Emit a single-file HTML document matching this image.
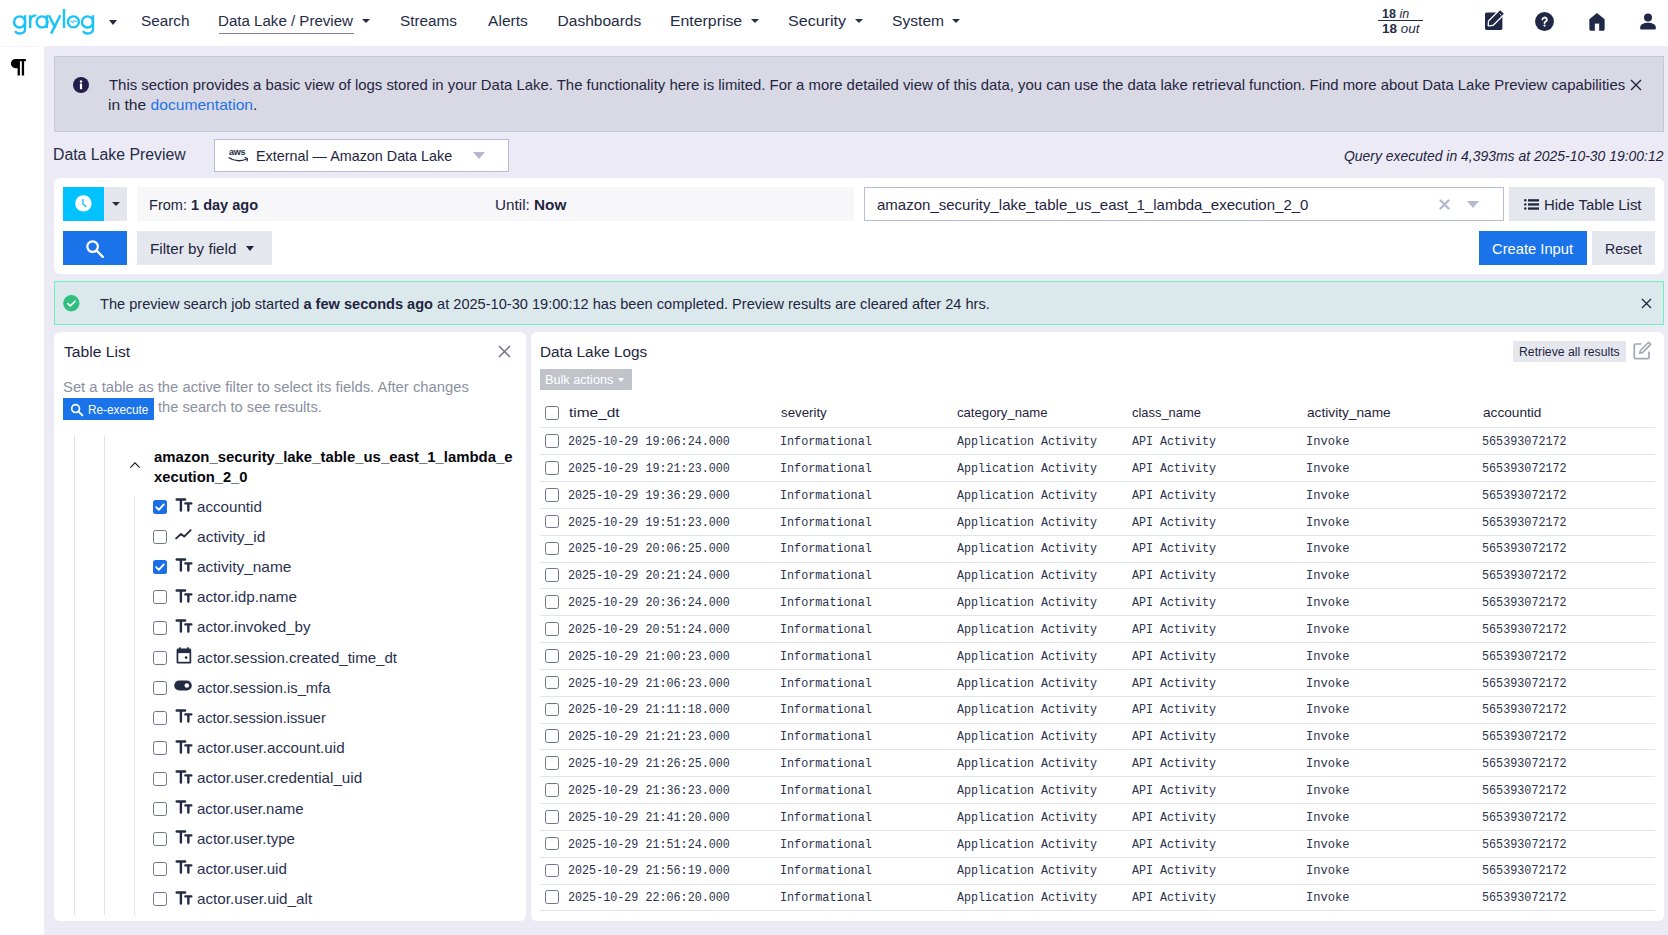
<!DOCTYPE html>
<html><head><meta charset="utf-8">
<style>
*{box-sizing:border-box}
html,body{margin:0;padding:0}
body{width:1668px;height:935px;overflow:hidden;position:relative;background:#fff;font-family:"Liberation Sans",sans-serif}
.a{position:absolute}
.t{position:absolute;white-space:nowrap;line-height:0;transform-origin:0 0}
.t b{font-weight:700}
.cb{position:absolute;width:14px;height:14px;border:1.3px solid #70758a;border-radius:2.5px;background:#fff}
.cbc{position:absolute;width:14px;height:14px;border-radius:2.5px;background:#1a6fe8}
.caret{position:absolute;width:0;height:0;border-left:4px solid transparent;border-right:4px solid transparent;border-top:4.5px solid #252c46}
.rowb{position:absolute;left:540px;width:1115px;height:1px;background:#e1e5ee}
.vl{position:absolute;width:1px;background:#e3e4eb}
</style></head><body>
<!-- navbar -->
<div class="a" style="left:0;top:0;width:1668px;height:46px;background:#fff"></div>
<!-- content bg -->
<div class="a" style="left:44px;top:46px;width:1624px;height:889px;background:#ecebf5;border-top-left-radius:3px"></div>
<div class="a" style="left:0;top:46px;width:44px;height:1px;background:#f4f4f8"></div>

<svg class="a" style="left:0;top:0" width="100" height="40" viewBox="0 0 100 40">
<g fill="none" stroke="#17c3f7" stroke-width="2.4">
<circle cx="19.6" cy="21.9" r="5.55"/><path d="M25 15.2V29.2c0 2.6-2.3 4.3-5.2 4.3-2.1 0-3.8-.9-4.8-2.4"/>
<path d="M30.2 28V15.3M30.2 21c.3-3.7 2.6-5.6 6.2-5.6"/>
<circle cx="42.1" cy="21.9" r="5.5"/><path d="M46.8 15.2V28"/>
<path d="M48.9 15.3L55.3 28.3M60.3 15.3L51.1 33.6"/>
<path d="M64 9V28"/>
<circle cx="73.4" cy="21.85" r="5.5"/>
<circle cx="87.5" cy="21.9" r="5.55"/><path d="M93 15.2V29.2c0 2.6-2.3 4.3-5.2 4.3-2.1 0-3.8-.9-4.8-2.4"/>
</g>
<path d="M70.2 21.4H71.8L72.7 23.2 73.7 20.2 74.5 21.4H76.8" fill="none" stroke="#17c3f7" stroke-width=".9"/>
</svg>
<!-- nav carets -->
<div class="caret" style="left:108.5px;top:20px;border-left-width:4.2px;border-right-width:4.2px;border-top-width:5px"></div>
<div class="caret" style="left:361.5px;top:18.5px"></div>
<div class="caret" style="left:751.3px;top:18.5px"></div>
<div class="caret" style="left:855.3px;top:18.5px"></div>
<div class="caret" style="left:952.3px;top:18.5px"></div>
<div class="a" style="left:219px;top:32.5px;width:135px;height:1.5px;background:#7d819a"></div>
<div class="a" style="left:1378px;top:20px;width:45px;height:1px;background:#252c46"></div>

<!-- nav icons -->
<svg class="a" style="left:1484px;top:10px" width="22" height="22" viewBox="0 0 22 22">
  <rect x="1" y="2.4" width="17.4" height="17.5" rx="1.6" fill="#1f2847"/>
  <path d="M16.2 .2L19.8 3.8 8.8 14.8 4.8 15.2 5.2 11.2z" fill="#1f2847" stroke="#fff" stroke-width="2.6" stroke-linejoin="round"/>
  <path d="M16.2 .2L19.8 3.8 8.8 14.8 4.8 15.2 5.2 11.2z" fill="#1f2847"/>
  <path d="M15.6 3.6l1.6 1.6" stroke="#fff" stroke-width=".9"/>
</svg>
<svg class="a" style="left:1535px;top:11.5px" width="19" height="19" viewBox="0 0 19 19">
  <circle cx="9.5" cy="9.5" r="9.4" fill="#1f2847"/>
  <path d="M7.4 7.6a2.2 2.1 0 1 1 3.2 1.9c-.8.4-1.1.8-1.1 1.6" fill="none" stroke="#fff" stroke-width="1.8" stroke-linecap="round"/>
  <circle cx="9.5" cy="13.6" r="1.1" fill="#fff"/>
</svg>
<svg class="a" style="left:1589px;top:12.5px" width="16" height="18" viewBox="0 0 16 18">
  <path d="M8 0.3L15.3 6.3V16.3a1.1 1.1 0 0 1-1.1 1.1H10.4V10.3H5.6V17.4H1.8A1.1 1.1 0 0 1 .7 16.3V6.3z" fill="#1f2847" stroke="#1f2847" stroke-width=".6" stroke-linejoin="round"/>
</svg>
<svg class="a" style="left:1640px;top:12.5px" width="16" height="17" viewBox="0 0 16 17">
  <circle cx="8" cy="4.4" r="4" fill="#1f2847"/>
  <path d="M0.2 14.2C0.6 11.2 3.5 9.7 8 9.7s7.4 1.5 7.8 4.5v1.2a1.1 1.1 0 0 1-1.1 1.1H1.3A1.1 1.1 0 0 1 .2 15.4z" fill="#1f2847"/>
</svg>

<!-- sidebar pilcrow -->
<svg class="a" style="left:10px;top:58px" width="17" height="18" viewBox="0 0 17 18">
<path d="M5.5 1H15.8V3.2H14.1V17.4H11.8V3.2H9.9V17.4H7.6V10.2H5.5A4.6 4.6 0 0 1 5.5 1z" fill="#000"/>
</svg>

<!-- info alert -->
<div class="a" style="left:54px;top:56px;width:1610px;height:76px;background:#d9d9e5;border:1px solid #c6c7d5"></div>
<svg class="a" style="left:73px;top:76.8px" width="16" height="16" viewBox="0 0 16 16">
  <circle cx="8" cy="8" r="8" fill="#221e4c"/>
  <rect x="6.9" y="6.6" width="2.2" height="5.6" rx=".5" fill="#fff"/>
  <circle cx="8" cy="4.5" r="1.2" fill="#fff"/>
</svg>
<svg class="a" style="left:1630px;top:78.5px" width="12" height="12" viewBox="0 0 12 12">
  <path d="M1 1L11 11M11 1L1 11" stroke="#1f2540" stroke-width="1.4"/>
</svg>

<!-- select -->
<div class="a" style="left:214px;top:138.6px;width:294.5px;height:33px;background:#fff;border:1px solid #b7bbd6"></div>
<div class="a" style="left:229.3px;top:146.5px;font:700 8.6px 'Liberation Sans',sans-serif;color:#232a44;line-height:10px;letter-spacing:-.3px;transform:scaleX(1.05);transform-origin:0 0">aws</div>
<svg class="a" style="left:228px;top:155.5px" width="21" height="7" viewBox="0 0 21 7">
  <path d="M1 1.8C6 5.5 14 5.5 18.5 3" fill="none" stroke="#232a44" stroke-width="1.3" stroke-linecap="round"/>
  <path d="M17 1.5L19.5 2.5 19 5" fill="none" stroke="#232a44" stroke-width="1.2" stroke-linecap="round"/>
</svg>
<div class="caret" style="left:473px;top:151.6px;border-left-width:6.2px;border-right-width:6.2px;border-top-width:7px;border-top-color:#b4b8cf"></div>

<!-- search panel -->
<div class="a" style="left:54px;top:178px;width:1610px;height:96px;background:#fff;border-radius:6px"></div>
<div class="a" style="left:63px;top:187px;width:41px;height:34px;background:#00c2ff"></div>
<svg class="a" style="left:75px;top:195.3px" width="17" height="17" viewBox="0 0 17 17">
  <circle cx="8.4" cy="8.4" r="8.2" fill="#fff"/>
  <path d="M8 4.5V9l2.8 2.6" fill="none" stroke="#00c2ff" stroke-width="1.3" stroke-linecap="round"/>
</svg>
<div class="a" style="left:104px;top:187px;width:23px;height:34px;background:#e4e6ee"></div>
<div class="caret" style="left:111.8px;top:201.8px;border-top-color:#2a2a35;border-top-width:4.5px"></div>
<div class="a" style="left:137px;top:187px;width:717px;height:34px;background:#f7f7fa"></div>
<div class="a" style="left:864px;top:187px;width:640px;height:34px;background:#fff;border:1px solid #b7bbd6"></div>
<svg class="a" style="left:1438.5px;top:198.5px" width="11" height="11" viewBox="0 0 11 11">
  <path d="M1.5 1.5L9.5 9.5M9.5 1.5L1.5 9.5" stroke="#b5b9d2" stroke-width="2.3" stroke-linecap="round"/>
</svg>
<div class="caret" style="left:1467px;top:201px;border-left-width:6px;border-right-width:6px;border-top-width:7px;border-top-color:#b4b8cf"></div>
<div class="a" style="left:1509px;top:187px;width:146px;height:34px;background:#e5e7ee"></div>
<svg class="a" style="left:1523.5px;top:198.5px" width="16" height="11" viewBox="0 0 16 11">
  <circle cx="1.3" cy="1.3" r="1.2" fill="#1f2540"/><circle cx="1.3" cy="5.4" r="1.2" fill="#1f2540"/><circle cx="1.3" cy="9.5" r="1.2" fill="#1f2540"/>
  <rect x="4" y=".2" width="11" height="2.3" fill="#1f2540"/><rect x="4" y="4.3" width="11" height="2.3" fill="#1f2540"/><rect x="4" y="8.4" width="11" height="2.3" fill="#1f2540"/>
</svg>
<div class="a" style="left:63px;top:231px;width:64px;height:34px;background:#1a73e8"></div>
<svg class="a" style="left:85px;top:238.5px" width="20" height="20" viewBox="0 0 20 20">
  <circle cx="7.6" cy="7.6" r="5.3" fill="none" stroke="#fff" stroke-width="2.2"/>
  <path d="M11.5 11.5L17.8 17.8" stroke="#fff" stroke-width="2.4" stroke-linecap="round"/>
</svg>
<div class="a" style="left:137px;top:231px;width:135px;height:34px;background:#e5e7ee"></div>
<div class="caret" style="left:245.6px;top:245.8px;border-top-color:#1f2540;border-top-width:5px"></div>
<div class="a" style="left:1479px;top:231px;width:108px;height:34px;background:#1a73e8"></div>
<div class="a" style="left:1592px;top:231px;width:63px;height:34px;background:#e5e7ee"></div>

<!-- success alert -->
<div class="a" style="left:54px;top:281px;width:1610px;height:44px;background:#dbe9ec;border:1px solid #6bf3bd"></div>
<svg class="a" style="left:63px;top:294.8px" width="17" height="17" viewBox="0 0 17 17">
  <circle cx="8.3" cy="8.3" r="8.2" fill="#2fbf7f"/>
  <path d="M4.8 8.6l2.4 2.3 4.8-4.6" fill="none" stroke="#fff" stroke-width="1.6" stroke-linecap="round" stroke-linejoin="round"/>
</svg>
<svg class="a" style="left:1640.5px;top:297.5px" width="11" height="11" viewBox="0 0 11 11">
  <path d="M1 1L10 10M10 1L1 10" stroke="#1f2540" stroke-width="1.25"/>
</svg>

<!-- table list panel -->
<div class="a" style="left:54px;top:332px;width:472px;height:589px;background:#fff;border-radius:6px"></div>
<svg class="a" style="left:497.5px;top:344.5px" width="13" height="13" viewBox="0 0 13 13">
  <path d="M1 1L12 12M12 1L1 12" stroke="#6f7386" stroke-width="1.5"/>
</svg>
<div class="a" style="left:63px;top:398px;width:91px;height:22px;background:#1a73e8"></div>
<svg class="a" style="left:69.5px;top:403px" width="14" height="14" viewBox="0 0 14 14">
  <circle cx="5.6" cy="5.6" r="3.9" fill="none" stroke="#fff" stroke-width="1.7"/>
  <path d="M8.4 8.4L12.4 12.4" stroke="#fff" stroke-width="1.9" stroke-linecap="round"/>
</svg>
<div class="vl" style="left:74px;top:435px;height:480px"></div>
<div class="vl" style="left:104px;top:435px;height:480px"></div>
<div class="vl" style="left:134px;top:496px;height:419px"></div>
<svg class="a" style="left:129px;top:461px" width="12" height="8" viewBox="0 0 12 8">
  <path d="M1.3 6.6L6 1.8l4.7 4.8" fill="none" stroke="#15182a" stroke-width="1.1"/>
</svg>
<div class="cbc" style="left:153px;top:499.80px"></div>
<svg class="a" style="left:153px;top:499.80px" width="14" height="14" viewBox="0 0 14 14"><path d="M3.2 7.2l2.6 2.6 5-5.4" fill="none" stroke="#fff" stroke-width="1.9" stroke-linecap="round" stroke-linejoin="round"/></svg>
<svg class="a" style="left:174.5px;top:497.90px" width="18" height="14" viewBox="0 0 18 14"><path d="M1.7 1.5h8.4M5.9 1.5v11.1M10.4 5.4h5.9M13.35 5.4v7.2" fill="none" stroke="#232a44" stroke-width="2.4" stroke-linecap="round"/></svg>
<div class="cb" style="left:153px;top:530.00px"></div>
<svg class="a" style="left:175px;top:529.40px" width="17" height="11" viewBox="0 0 17 11"><path d="M1.2 9.4L6 5l3.2 2.6 6.4-6.4" fill="none" stroke="#232a44" stroke-width="1.9" stroke-linecap="round" stroke-linejoin="round"/></svg>
<div class="cbc" style="left:153px;top:560.20px"></div>
<svg class="a" style="left:153px;top:560.20px" width="14" height="14" viewBox="0 0 14 14"><path d="M3.2 7.2l2.6 2.6 5-5.4" fill="none" stroke="#fff" stroke-width="1.9" stroke-linecap="round" stroke-linejoin="round"/></svg>
<svg class="a" style="left:174.5px;top:558.30px" width="18" height="14" viewBox="0 0 18 14"><path d="M1.7 1.5h8.4M5.9 1.5v11.1M10.4 5.4h5.9M13.35 5.4v7.2" fill="none" stroke="#232a44" stroke-width="2.4" stroke-linecap="round"/></svg>
<div class="cb" style="left:153px;top:590.40px"></div>
<svg class="a" style="left:174.5px;top:588.50px" width="18" height="14" viewBox="0 0 18 14"><path d="M1.7 1.5h8.4M5.9 1.5v11.1M10.4 5.4h5.9M13.35 5.4v7.2" fill="none" stroke="#232a44" stroke-width="2.4" stroke-linecap="round"/></svg>
<div class="cb" style="left:153px;top:620.60px"></div>
<svg class="a" style="left:174.5px;top:618.70px" width="18" height="14" viewBox="0 0 18 14"><path d="M1.7 1.5h8.4M5.9 1.5v11.1M10.4 5.4h5.9M13.35 5.4v7.2" fill="none" stroke="#232a44" stroke-width="2.4" stroke-linecap="round"/></svg>
<div class="cb" style="left:153px;top:650.80px"></div>
<svg class="a" style="left:175.5px;top:647.00px" width="16" height="17" viewBox="0 0 16 17"><rect x=".6" y="1.6" width="14.6" height="15" rx="1.3" fill="#232a44"/><rect x="2.3" y="6.1" width="11.2" height="8.7" fill="#fff"/><circle cx="10.1" cy="10.6" r="1.3" fill="#232a44"/><rect x="3.2" y=".3" width="1.6" height="2.5" fill="#232a44"/><rect x="11" y=".3" width="1.6" height="2.5" fill="#232a44"/></svg>
<div class="cb" style="left:153px;top:681.00px"></div>
<svg class="a" style="left:174px;top:680.20px" width="18" height="11" viewBox="0 0 18 11"><rect x=".2" y=".4" width="17.6" height="10.2" rx="5.1" fill="#232a44"/><circle cx="12.8" cy="5.5" r="2.3" fill="#fff"/></svg>
<div class="cb" style="left:153px;top:711.20px"></div>
<svg class="a" style="left:174.5px;top:709.30px" width="18" height="14" viewBox="0 0 18 14"><path d="M1.7 1.5h8.4M5.9 1.5v11.1M10.4 5.4h5.9M13.35 5.4v7.2" fill="none" stroke="#232a44" stroke-width="2.4" stroke-linecap="round"/></svg>
<div class="cb" style="left:153px;top:741.40px"></div>
<svg class="a" style="left:174.5px;top:739.50px" width="18" height="14" viewBox="0 0 18 14"><path d="M1.7 1.5h8.4M5.9 1.5v11.1M10.4 5.4h5.9M13.35 5.4v7.2" fill="none" stroke="#232a44" stroke-width="2.4" stroke-linecap="round"/></svg>
<div class="cb" style="left:153px;top:771.60px"></div>
<svg class="a" style="left:174.5px;top:769.70px" width="18" height="14" viewBox="0 0 18 14"><path d="M1.7 1.5h8.4M5.9 1.5v11.1M10.4 5.4h5.9M13.35 5.4v7.2" fill="none" stroke="#232a44" stroke-width="2.4" stroke-linecap="round"/></svg>
<div class="cb" style="left:153px;top:801.80px"></div>
<svg class="a" style="left:174.5px;top:799.90px" width="18" height="14" viewBox="0 0 18 14"><path d="M1.7 1.5h8.4M5.9 1.5v11.1M10.4 5.4h5.9M13.35 5.4v7.2" fill="none" stroke="#232a44" stroke-width="2.4" stroke-linecap="round"/></svg>
<div class="cb" style="left:153px;top:832.00px"></div>
<svg class="a" style="left:174.5px;top:830.10px" width="18" height="14" viewBox="0 0 18 14"><path d="M1.7 1.5h8.4M5.9 1.5v11.1M10.4 5.4h5.9M13.35 5.4v7.2" fill="none" stroke="#232a44" stroke-width="2.4" stroke-linecap="round"/></svg>
<div class="cb" style="left:153px;top:862.20px"></div>
<svg class="a" style="left:174.5px;top:860.30px" width="18" height="14" viewBox="0 0 18 14"><path d="M1.7 1.5h8.4M5.9 1.5v11.1M10.4 5.4h5.9M13.35 5.4v7.2" fill="none" stroke="#232a44" stroke-width="2.4" stroke-linecap="round"/></svg>
<div class="cb" style="left:153px;top:892.40px"></div>
<svg class="a" style="left:174.5px;top:890.50px" width="18" height="14" viewBox="0 0 18 14"><path d="M1.7 1.5h8.4M5.9 1.5v11.1M10.4 5.4h5.9M13.35 5.4v7.2" fill="none" stroke="#232a44" stroke-width="2.4" stroke-linecap="round"/></svg>

<!-- data lake logs panel -->
<div class="a" style="left:531px;top:332px;width:1133px;height:589px;background:#fff;border-radius:6px"></div>
<div class="a" style="left:1513px;top:341px;width:113px;height:21px;background:#e5e7ee"></div>
<svg class="a" style="left:1633px;top:341px" width="19" height="19" viewBox="0 0 19 19">
  <path d="M8.5 3H2.6A1.3 1.3 0 0 0 1.3 4.3v12.1a1.3 1.3 0 0 0 1.3 1.3h12.1a1.3 1.3 0 0 0 1.3-1.3V10.5" fill="none" stroke="#a3a6b3" stroke-width="1.7"/>
  <path d="M15.6 1.3l2.1 2.1-8 8-3 .9.9-3z" fill="none" stroke="#a3a6b3" stroke-width="1.6" stroke-linejoin="round"/>
</svg>
<div class="a" style="left:540px;top:369px;width:92px;height:21px;background:#c1c3cb"></div>
<div class="caret" style="left:618px;top:377.5px;border-top-color:#fff;border-left-width:3.5px;border-right-width:3.5px;border-top-width:4px"></div>
<div class="cb" style="left:545px;top:406.2px;width:13.7px;height:13.7px"></div>
<div class="rowb" style="top:427px"></div>
<div class="cb" style="left:545px;top:434.30px;width:13.7px;height:13.7px"></div>
<div class="rowb" style="top:454.33px"></div>
<div class="cb" style="left:545px;top:461.13px;width:13.7px;height:13.7px"></div>
<div class="rowb" style="top:481.16px"></div>
<div class="cb" style="left:545px;top:487.96px;width:13.7px;height:13.7px"></div>
<div class="rowb" style="top:507.99px"></div>
<div class="cb" style="left:545px;top:514.79px;width:13.7px;height:13.7px"></div>
<div class="rowb" style="top:534.82px"></div>
<div class="cb" style="left:545px;top:541.62px;width:13.7px;height:13.7px"></div>
<div class="rowb" style="top:561.65px"></div>
<div class="cb" style="left:545px;top:568.45px;width:13.7px;height:13.7px"></div>
<div class="rowb" style="top:588.48px"></div>
<div class="cb" style="left:545px;top:595.28px;width:13.7px;height:13.7px"></div>
<div class="rowb" style="top:615.31px"></div>
<div class="cb" style="left:545px;top:622.11px;width:13.7px;height:13.7px"></div>
<div class="rowb" style="top:642.14px"></div>
<div class="cb" style="left:545px;top:648.94px;width:13.7px;height:13.7px"></div>
<div class="rowb" style="top:668.97px"></div>
<div class="cb" style="left:545px;top:675.77px;width:13.7px;height:13.7px"></div>
<div class="rowb" style="top:695.80px"></div>
<div class="cb" style="left:545px;top:702.60px;width:13.7px;height:13.7px"></div>
<div class="rowb" style="top:722.63px"></div>
<div class="cb" style="left:545px;top:729.43px;width:13.7px;height:13.7px"></div>
<div class="rowb" style="top:749.46px"></div>
<div class="cb" style="left:545px;top:756.26px;width:13.7px;height:13.7px"></div>
<div class="rowb" style="top:776.29px"></div>
<div class="cb" style="left:545px;top:783.09px;width:13.7px;height:13.7px"></div>
<div class="rowb" style="top:803.12px"></div>
<div class="cb" style="left:545px;top:809.92px;width:13.7px;height:13.7px"></div>
<div class="rowb" style="top:829.95px"></div>
<div class="cb" style="left:545px;top:836.75px;width:13.7px;height:13.7px"></div>
<div class="rowb" style="top:856.78px"></div>
<div class="cb" style="left:545px;top:863.58px;width:13.7px;height:13.7px"></div>
<div class="rowb" style="top:883.61px"></div>
<div class="cb" style="left:545px;top:890.41px;width:13.7px;height:13.7px"></div>
<div class="rowb" style="top:910.44px"></div>
<div class="t" style="left:141.01px;top:21.20px;font-family:'Liberation Sans', sans-serif;font-size:15.5px;font-weight:400;font-style:normal;color:#252c46;transform:scaleX(0.9875)">Search</div>
<div class="t" style="left:218.23px;top:21.20px;font-family:'Liberation Sans', sans-serif;font-size:15.5px;font-weight:400;font-style:normal;color:#252c46;transform:scaleX(0.9732)">Data Lake / Preview</div>
<div class="t" style="left:399.71px;top:21.20px;font-family:'Liberation Sans', sans-serif;font-size:15.5px;font-weight:400;font-style:normal;color:#252c46;transform:scaleX(0.9877)">Streams</div>
<div class="t" style="left:488.10px;top:21.20px;font-family:'Liberation Sans', sans-serif;font-size:15.5px;font-weight:400;font-style:normal;color:#252c46;transform:scaleX(1.0000)">Alerts</div>
<div class="t" style="left:557.60px;top:21.20px;font-family:'Liberation Sans', sans-serif;font-size:15.5px;font-weight:400;font-style:normal;color:#252c46;transform:scaleX(1.0000)">Dashboards</div>
<div class="t" style="left:670.48px;top:21.20px;font-family:'Liberation Sans', sans-serif;font-size:15.5px;font-weight:400;font-style:normal;color:#252c46;transform:scaleX(1.0217)">Enterprise</div>
<div class="t" style="left:787.86px;top:21.20px;font-family:'Liberation Sans', sans-serif;font-size:15.5px;font-weight:400;font-style:normal;color:#252c46;transform:scaleX(1.0364)">Security</div>
<div class="t" style="left:892.19px;top:21.20px;font-family:'Liberation Sans', sans-serif;font-size:15.5px;font-weight:400;font-style:normal;color:#252c46;transform:scaleX(1.0080)">System</div>
<div class="t" style="left:1381.80px;top:13.50px;font-family:'Liberation Sans', sans-serif;font-size:12.5px;font-weight:400;font-style:normal;color:#252c46;transform:scaleX(1.0037)"><b style="font-weight:700">18</b> <i>in</i></div>
<div class="t" style="left:1381.80px;top:28.90px;font-family:'Liberation Sans', sans-serif;font-size:12.5px;font-weight:400;font-style:normal;color:#252c46;transform:scaleX(1.0771)"><b style="font-weight:700">18</b> <i>out</i></div>
<div class="t" style="left:109.20px;top:84.50px;font-family:'Liberation Sans', sans-serif;font-size:15px;font-weight:400;font-style:normal;color:#1f2540;transform:scaleX(0.9933)">This section provides a basic view of logs stored in your Data Lake. The functionality here is limited. For a more detailed view of this data, you can use the data lake retrieval function. Find more about Data Lake Preview capabilities</div>
<div class="t" style="left:108.16px;top:104.60px;font-family:'Liberation Sans', sans-serif;font-size:15px;font-weight:400;font-style:normal;color:#1f2540;transform:scaleX(1.0411)">in the <span style="color:#1f73e6">documentation</span>.</div>
<div class="t" style="left:53.41px;top:155.20px;font-family:'Liberation Sans', sans-serif;font-size:16px;font-weight:400;font-style:normal;color:#252c46;transform:scaleX(0.9881)">Data Lake Preview</div>
<div class="t" style="left:256.34px;top:156.00px;font-family:'Liberation Sans', sans-serif;font-size:15px;font-weight:400;font-style:normal;color:#1f2540;transform:scaleX(0.9564)">External — Amazon Data Lake</div>
<div class="t" style="left:1343.50px;top:156.00px;font-family:'Liberation Sans', sans-serif;font-size:14.5px;font-weight:400;font-style:italic;color:#1f2540;transform:scaleX(0.9620)">Query executed in 4,393ms at 2025-10-30 19:00:12</div>
<div class="t" style="left:149.23px;top:205.00px;font-family:'Liberation Sans', sans-serif;font-size:15px;font-weight:400;font-style:normal;color:#1f2540;transform:scaleX(0.9694)">From: <b>1 day ago</b></div>
<div class="t" style="left:494.98px;top:205.00px;font-family:'Liberation Sans', sans-serif;font-size:15px;font-weight:400;font-style:normal;color:#1f2540;transform:scaleX(1.0188)">Until: <b>Now</b></div>
<div class="t" style="left:877.00px;top:205.00px;font-family:'Liberation Sans', sans-serif;font-size:15px;font-weight:400;font-style:normal;color:#1f2540;transform:scaleX(1.0007)">amazon_security_lake_table_us_east_1_lambda_execution_2_0</div>
<div class="t" style="left:1544.31px;top:205.00px;font-family:'Liberation Sans', sans-serif;font-size:15px;font-weight:400;font-style:normal;color:#1f2540;transform:scaleX(0.9938)">Hide Table List</div>
<div class="t" style="left:150.15px;top:248.70px;font-family:'Liberation Sans', sans-serif;font-size:14.5px;font-weight:400;font-style:normal;color:#1f2540;transform:scaleX(1.0506)">Filter by field</div>
<div class="t" style="left:1492.30px;top:249.10px;font-family:'Liberation Sans', sans-serif;font-size:15px;font-weight:400;font-style:normal;color:#ffffff;transform:scaleX(0.9819)">Create Input</div>
<div class="t" style="left:1604.96px;top:249.10px;font-family:'Liberation Sans', sans-serif;font-size:15px;font-weight:400;font-style:normal;color:#1f2540;transform:scaleX(0.9421)">Reset</div>
<div class="t" style="left:99.50px;top:303.70px;font-family:'Liberation Sans', sans-serif;font-size:15px;font-weight:400;font-style:normal;color:#1f2540;transform:scaleX(0.9719)">The preview search job started <b>a few seconds ago</b> at 2025-10-30 19:00:12 has been completed. Preview results are cleared after 24 hrs.</div>
<div class="t" style="left:63.90px;top:351.90px;font-family:'Liberation Sans', sans-serif;font-size:15.5px;font-weight:400;font-style:normal;color:#1f2540;transform:scaleX(1.0106)">Table List</div>
<div class="t" style="left:62.74px;top:387.40px;font-family:'Liberation Sans', sans-serif;font-size:14px;font-weight:400;font-style:normal;color:#8b90a1;transform:scaleX(1.0580)">Set a table as the active filter to select its fields. After changes</div>
<div class="t" style="left:87.83px;top:410.20px;font-family:'Liberation Sans', sans-serif;font-size:13.5px;font-weight:400;font-style:normal;color:#ffffff;transform:scaleX(0.8750)">Re-execute</div>
<div class="t" style="left:157.90px;top:407.40px;font-family:'Liberation Sans', sans-serif;font-size:14px;font-weight:400;font-style:normal;color:#8b90a1;transform:scaleX(1.0474)">the search to see results.</div>
<div class="t" style="left:153.50px;top:456.70px;font-family:'Liberation Sans', sans-serif;font-size:15px;font-weight:700;font-style:normal;color:#06070d;transform:scaleX(0.9931)">amazon_security_lake_table_us_east_1_lambda_e</div>
<div class="t" style="left:153.50px;top:476.60px;font-family:'Liberation Sans', sans-serif;font-size:15px;font-weight:700;font-style:normal;color:#06070d;transform:scaleX(0.9842)">xecution_2_0</div>
<div class="t" style="left:197.40px;top:506.50px;font-family:'Liberation Sans', sans-serif;font-size:14.5px;font-weight:400;font-style:normal;color:#2a3150;transform:scaleX(1.0452)">accountid</div>
<div class="t" style="left:197.40px;top:536.70px;font-family:'Liberation Sans', sans-serif;font-size:14.5px;font-weight:400;font-style:normal;color:#2a3150;transform:scaleX(1.0730)">activity_id</div>
<div class="t" style="left:197.40px;top:566.90px;font-family:'Liberation Sans', sans-serif;font-size:14.5px;font-weight:400;font-style:normal;color:#2a3150;transform:scaleX(1.0648)">activity_name</div>
<div class="t" style="left:197.40px;top:597.10px;font-family:'Liberation Sans', sans-serif;font-size:14.5px;font-weight:400;font-style:normal;color:#2a3150;transform:scaleX(1.0516)">actor.idp.name</div>
<div class="t" style="left:197.40px;top:627.30px;font-family:'Liberation Sans', sans-serif;font-size:14.5px;font-weight:400;font-style:normal;color:#2a3150;transform:scaleX(1.0440)">actor.invoked_by</div>
<div class="t" style="left:197.40px;top:657.50px;font-family:'Liberation Sans', sans-serif;font-size:14.5px;font-weight:400;font-style:normal;color:#2a3150;transform:scaleX(1.0383)">actor.session.created_time_dt</div>
<div class="t" style="left:197.40px;top:687.70px;font-family:'Liberation Sans', sans-serif;font-size:14.5px;font-weight:400;font-style:normal;color:#2a3150;transform:scaleX(1.0152)">actor.session.is_mfa</div>
<div class="t" style="left:197.40px;top:717.90px;font-family:'Liberation Sans', sans-serif;font-size:14.5px;font-weight:400;font-style:normal;color:#2a3150;transform:scaleX(1.0125)">actor.session.issuer</div>
<div class="t" style="left:197.40px;top:748.10px;font-family:'Liberation Sans', sans-serif;font-size:14.5px;font-weight:400;font-style:normal;color:#2a3150;transform:scaleX(1.0461)">actor.user.account.uid</div>
<div class="t" style="left:197.40px;top:778.30px;font-family:'Liberation Sans', sans-serif;font-size:14.5px;font-weight:400;font-style:normal;color:#2a3150;transform:scaleX(1.0510)">actor.user.credential_uid</div>
<div class="t" style="left:197.40px;top:808.50px;font-family:'Liberation Sans', sans-serif;font-size:14.5px;font-weight:400;font-style:normal;color:#2a3150;transform:scaleX(1.0330)">actor.user.name</div>
<div class="t" style="left:197.40px;top:838.70px;font-family:'Liberation Sans', sans-serif;font-size:14.5px;font-weight:400;font-style:normal;color:#2a3150;transform:scaleX(1.0383)">actor.user.type</div>
<div class="t" style="left:197.40px;top:868.90px;font-family:'Liberation Sans', sans-serif;font-size:14.5px;font-weight:400;font-style:normal;color:#2a3150;transform:scaleX(1.0419)">actor.user.uid</div>
<div class="t" style="left:197.40px;top:899.10px;font-family:'Liberation Sans', sans-serif;font-size:14.5px;font-weight:400;font-style:normal;color:#2a3150;transform:scaleX(1.0500)">actor.user.uid_alt</div>
<div class="t" style="left:540.21px;top:352.30px;font-family:'Liberation Sans', sans-serif;font-size:15.5px;font-weight:400;font-style:normal;color:#1f2540;transform:scaleX(0.9879)">Data Lake Logs</div>
<div class="t" style="left:1518.82px;top:351.70px;font-family:'Liberation Sans', sans-serif;font-size:12.5px;font-weight:400;font-style:normal;color:#1f2540;transform:scaleX(0.9794)">Retrieve all results</div>
<div class="t" style="left:544.79px;top:380.20px;font-family:'Liberation Sans', sans-serif;font-size:12.5px;font-weight:400;font-style:normal;color:#ffffff;transform:scaleX(1.0136)">Bulk actions</div>
<div class="t" style="left:568.70px;top:412.70px;font-family:'Liberation Sans', sans-serif;font-size:13.5px;font-weight:400;font-style:normal;color:#1f2540;transform:scaleX(1.1432)">time_dt</div>
<div class="t" style="left:781.30px;top:412.70px;font-family:'Liberation Sans', sans-serif;font-size:13.5px;font-weight:400;font-style:normal;color:#1f2540;transform:scaleX(0.9830)">severity</div>
<div class="t" style="left:956.50px;top:412.70px;font-family:'Liberation Sans', sans-serif;font-size:13.5px;font-weight:400;font-style:normal;color:#1f2540;transform:scaleX(0.9731)">category_name</div>
<div class="t" style="left:1131.70px;top:412.70px;font-family:'Liberation Sans', sans-serif;font-size:13.5px;font-weight:400;font-style:normal;color:#1f2540;transform:scaleX(0.9569)">class_name</div>
<div class="t" style="left:1306.80px;top:412.70px;font-family:'Liberation Sans', sans-serif;font-size:13.5px;font-weight:400;font-style:normal;color:#1f2540;transform:scaleX(1.0146)">activity_name</div>
<div class="t" style="left:1482.60px;top:412.70px;font-family:'Liberation Sans', sans-serif;font-size:13.5px;font-weight:400;font-style:normal;color:#1f2540;transform:scaleX(1.0105)">accountid</div>
<div class="t" style="left:567.80px;top:442.10px;font-family:'Liberation Mono', monospace;font-size:13px;font-weight:400;font-style:normal;color:#2c334d;transform:scaleX(0.9022)">2025-10-29 19:06:24.000</div>
<div class="t" style="left:780.39px;top:442.10px;font-family:'Liberation Mono', monospace;font-size:13px;font-weight:400;font-style:normal;color:#2c334d;transform:scaleX(0.9050)">Informational</div>
<div class="t" style="left:956.50px;top:442.10px;font-family:'Liberation Mono', monospace;font-size:13px;font-weight:400;font-style:normal;color:#2c334d;transform:scaleX(0.8968)">Application Activity</div>
<div class="t" style="left:1131.70px;top:442.10px;font-family:'Liberation Mono', monospace;font-size:13px;font-weight:400;font-style:normal;color:#2c334d;transform:scaleX(0.8978)">API Activity</div>
<div class="t" style="left:1305.87px;top:442.10px;font-family:'Liberation Mono', monospace;font-size:13px;font-weight:400;font-style:normal;color:#2c334d;transform:scaleX(0.9311)">Invoke</div>
<div class="t" style="left:1481.70px;top:442.10px;font-family:'Liberation Mono', monospace;font-size:13px;font-weight:400;font-style:normal;color:#2c334d;transform:scaleX(0.9043)">565393072172</div>
<div class="t" style="left:567.80px;top:468.93px;font-family:'Liberation Mono', monospace;font-size:13px;font-weight:400;font-style:normal;color:#2c334d;transform:scaleX(0.9022)">2025-10-29 19:21:23.000</div>
<div class="t" style="left:780.39px;top:468.93px;font-family:'Liberation Mono', monospace;font-size:13px;font-weight:400;font-style:normal;color:#2c334d;transform:scaleX(0.9050)">Informational</div>
<div class="t" style="left:956.50px;top:468.93px;font-family:'Liberation Mono', monospace;font-size:13px;font-weight:400;font-style:normal;color:#2c334d;transform:scaleX(0.8968)">Application Activity</div>
<div class="t" style="left:1131.70px;top:468.93px;font-family:'Liberation Mono', monospace;font-size:13px;font-weight:400;font-style:normal;color:#2c334d;transform:scaleX(0.8978)">API Activity</div>
<div class="t" style="left:1305.87px;top:468.93px;font-family:'Liberation Mono', monospace;font-size:13px;font-weight:400;font-style:normal;color:#2c334d;transform:scaleX(0.9311)">Invoke</div>
<div class="t" style="left:1481.70px;top:468.93px;font-family:'Liberation Mono', monospace;font-size:13px;font-weight:400;font-style:normal;color:#2c334d;transform:scaleX(0.9043)">565393072172</div>
<div class="t" style="left:567.80px;top:495.76px;font-family:'Liberation Mono', monospace;font-size:13px;font-weight:400;font-style:normal;color:#2c334d;transform:scaleX(0.9022)">2025-10-29 19:36:29.000</div>
<div class="t" style="left:780.39px;top:495.76px;font-family:'Liberation Mono', monospace;font-size:13px;font-weight:400;font-style:normal;color:#2c334d;transform:scaleX(0.9050)">Informational</div>
<div class="t" style="left:956.50px;top:495.76px;font-family:'Liberation Mono', monospace;font-size:13px;font-weight:400;font-style:normal;color:#2c334d;transform:scaleX(0.8968)">Application Activity</div>
<div class="t" style="left:1131.70px;top:495.76px;font-family:'Liberation Mono', monospace;font-size:13px;font-weight:400;font-style:normal;color:#2c334d;transform:scaleX(0.8978)">API Activity</div>
<div class="t" style="left:1305.87px;top:495.76px;font-family:'Liberation Mono', monospace;font-size:13px;font-weight:400;font-style:normal;color:#2c334d;transform:scaleX(0.9311)">Invoke</div>
<div class="t" style="left:1481.70px;top:495.76px;font-family:'Liberation Mono', monospace;font-size:13px;font-weight:400;font-style:normal;color:#2c334d;transform:scaleX(0.9043)">565393072172</div>
<div class="t" style="left:567.80px;top:522.59px;font-family:'Liberation Mono', monospace;font-size:13px;font-weight:400;font-style:normal;color:#2c334d;transform:scaleX(0.9022)">2025-10-29 19:51:23.000</div>
<div class="t" style="left:780.39px;top:522.59px;font-family:'Liberation Mono', monospace;font-size:13px;font-weight:400;font-style:normal;color:#2c334d;transform:scaleX(0.9050)">Informational</div>
<div class="t" style="left:956.50px;top:522.59px;font-family:'Liberation Mono', monospace;font-size:13px;font-weight:400;font-style:normal;color:#2c334d;transform:scaleX(0.8968)">Application Activity</div>
<div class="t" style="left:1131.70px;top:522.59px;font-family:'Liberation Mono', monospace;font-size:13px;font-weight:400;font-style:normal;color:#2c334d;transform:scaleX(0.8978)">API Activity</div>
<div class="t" style="left:1305.87px;top:522.59px;font-family:'Liberation Mono', monospace;font-size:13px;font-weight:400;font-style:normal;color:#2c334d;transform:scaleX(0.9311)">Invoke</div>
<div class="t" style="left:1481.70px;top:522.59px;font-family:'Liberation Mono', monospace;font-size:13px;font-weight:400;font-style:normal;color:#2c334d;transform:scaleX(0.9043)">565393072172</div>
<div class="t" style="left:567.80px;top:549.42px;font-family:'Liberation Mono', monospace;font-size:13px;font-weight:400;font-style:normal;color:#2c334d;transform:scaleX(0.9022)">2025-10-29 20:06:25.000</div>
<div class="t" style="left:780.39px;top:549.42px;font-family:'Liberation Mono', monospace;font-size:13px;font-weight:400;font-style:normal;color:#2c334d;transform:scaleX(0.9050)">Informational</div>
<div class="t" style="left:956.50px;top:549.42px;font-family:'Liberation Mono', monospace;font-size:13px;font-weight:400;font-style:normal;color:#2c334d;transform:scaleX(0.8968)">Application Activity</div>
<div class="t" style="left:1131.70px;top:549.42px;font-family:'Liberation Mono', monospace;font-size:13px;font-weight:400;font-style:normal;color:#2c334d;transform:scaleX(0.8978)">API Activity</div>
<div class="t" style="left:1305.87px;top:549.42px;font-family:'Liberation Mono', monospace;font-size:13px;font-weight:400;font-style:normal;color:#2c334d;transform:scaleX(0.9311)">Invoke</div>
<div class="t" style="left:1481.70px;top:549.42px;font-family:'Liberation Mono', monospace;font-size:13px;font-weight:400;font-style:normal;color:#2c334d;transform:scaleX(0.9043)">565393072172</div>
<div class="t" style="left:567.80px;top:576.25px;font-family:'Liberation Mono', monospace;font-size:13px;font-weight:400;font-style:normal;color:#2c334d;transform:scaleX(0.9022)">2025-10-29 20:21:24.000</div>
<div class="t" style="left:780.39px;top:576.25px;font-family:'Liberation Mono', monospace;font-size:13px;font-weight:400;font-style:normal;color:#2c334d;transform:scaleX(0.9050)">Informational</div>
<div class="t" style="left:956.50px;top:576.25px;font-family:'Liberation Mono', monospace;font-size:13px;font-weight:400;font-style:normal;color:#2c334d;transform:scaleX(0.8968)">Application Activity</div>
<div class="t" style="left:1131.70px;top:576.25px;font-family:'Liberation Mono', monospace;font-size:13px;font-weight:400;font-style:normal;color:#2c334d;transform:scaleX(0.8978)">API Activity</div>
<div class="t" style="left:1305.87px;top:576.25px;font-family:'Liberation Mono', monospace;font-size:13px;font-weight:400;font-style:normal;color:#2c334d;transform:scaleX(0.9311)">Invoke</div>
<div class="t" style="left:1481.70px;top:576.25px;font-family:'Liberation Mono', monospace;font-size:13px;font-weight:400;font-style:normal;color:#2c334d;transform:scaleX(0.9043)">565393072172</div>
<div class="t" style="left:567.80px;top:603.08px;font-family:'Liberation Mono', monospace;font-size:13px;font-weight:400;font-style:normal;color:#2c334d;transform:scaleX(0.9022)">2025-10-29 20:36:24.000</div>
<div class="t" style="left:780.39px;top:603.08px;font-family:'Liberation Mono', monospace;font-size:13px;font-weight:400;font-style:normal;color:#2c334d;transform:scaleX(0.9050)">Informational</div>
<div class="t" style="left:956.50px;top:603.08px;font-family:'Liberation Mono', monospace;font-size:13px;font-weight:400;font-style:normal;color:#2c334d;transform:scaleX(0.8968)">Application Activity</div>
<div class="t" style="left:1131.70px;top:603.08px;font-family:'Liberation Mono', monospace;font-size:13px;font-weight:400;font-style:normal;color:#2c334d;transform:scaleX(0.8978)">API Activity</div>
<div class="t" style="left:1305.87px;top:603.08px;font-family:'Liberation Mono', monospace;font-size:13px;font-weight:400;font-style:normal;color:#2c334d;transform:scaleX(0.9311)">Invoke</div>
<div class="t" style="left:1481.70px;top:603.08px;font-family:'Liberation Mono', monospace;font-size:13px;font-weight:400;font-style:normal;color:#2c334d;transform:scaleX(0.9043)">565393072172</div>
<div class="t" style="left:567.80px;top:629.91px;font-family:'Liberation Mono', monospace;font-size:13px;font-weight:400;font-style:normal;color:#2c334d;transform:scaleX(0.9022)">2025-10-29 20:51:24.000</div>
<div class="t" style="left:780.39px;top:629.91px;font-family:'Liberation Mono', monospace;font-size:13px;font-weight:400;font-style:normal;color:#2c334d;transform:scaleX(0.9050)">Informational</div>
<div class="t" style="left:956.50px;top:629.91px;font-family:'Liberation Mono', monospace;font-size:13px;font-weight:400;font-style:normal;color:#2c334d;transform:scaleX(0.8968)">Application Activity</div>
<div class="t" style="left:1131.70px;top:629.91px;font-family:'Liberation Mono', monospace;font-size:13px;font-weight:400;font-style:normal;color:#2c334d;transform:scaleX(0.8978)">API Activity</div>
<div class="t" style="left:1305.87px;top:629.91px;font-family:'Liberation Mono', monospace;font-size:13px;font-weight:400;font-style:normal;color:#2c334d;transform:scaleX(0.9311)">Invoke</div>
<div class="t" style="left:1481.70px;top:629.91px;font-family:'Liberation Mono', monospace;font-size:13px;font-weight:400;font-style:normal;color:#2c334d;transform:scaleX(0.9043)">565393072172</div>
<div class="t" style="left:567.80px;top:656.74px;font-family:'Liberation Mono', monospace;font-size:13px;font-weight:400;font-style:normal;color:#2c334d;transform:scaleX(0.9022)">2025-10-29 21:00:23.000</div>
<div class="t" style="left:780.39px;top:656.74px;font-family:'Liberation Mono', monospace;font-size:13px;font-weight:400;font-style:normal;color:#2c334d;transform:scaleX(0.9050)">Informational</div>
<div class="t" style="left:956.50px;top:656.74px;font-family:'Liberation Mono', monospace;font-size:13px;font-weight:400;font-style:normal;color:#2c334d;transform:scaleX(0.8968)">Application Activity</div>
<div class="t" style="left:1131.70px;top:656.74px;font-family:'Liberation Mono', monospace;font-size:13px;font-weight:400;font-style:normal;color:#2c334d;transform:scaleX(0.8978)">API Activity</div>
<div class="t" style="left:1305.87px;top:656.74px;font-family:'Liberation Mono', monospace;font-size:13px;font-weight:400;font-style:normal;color:#2c334d;transform:scaleX(0.9311)">Invoke</div>
<div class="t" style="left:1481.70px;top:656.74px;font-family:'Liberation Mono', monospace;font-size:13px;font-weight:400;font-style:normal;color:#2c334d;transform:scaleX(0.9043)">565393072172</div>
<div class="t" style="left:567.80px;top:683.57px;font-family:'Liberation Mono', monospace;font-size:13px;font-weight:400;font-style:normal;color:#2c334d;transform:scaleX(0.9022)">2025-10-29 21:06:23.000</div>
<div class="t" style="left:780.39px;top:683.57px;font-family:'Liberation Mono', monospace;font-size:13px;font-weight:400;font-style:normal;color:#2c334d;transform:scaleX(0.9050)">Informational</div>
<div class="t" style="left:956.50px;top:683.57px;font-family:'Liberation Mono', monospace;font-size:13px;font-weight:400;font-style:normal;color:#2c334d;transform:scaleX(0.8968)">Application Activity</div>
<div class="t" style="left:1131.70px;top:683.57px;font-family:'Liberation Mono', monospace;font-size:13px;font-weight:400;font-style:normal;color:#2c334d;transform:scaleX(0.8978)">API Activity</div>
<div class="t" style="left:1305.87px;top:683.57px;font-family:'Liberation Mono', monospace;font-size:13px;font-weight:400;font-style:normal;color:#2c334d;transform:scaleX(0.9311)">Invoke</div>
<div class="t" style="left:1481.70px;top:683.57px;font-family:'Liberation Mono', monospace;font-size:13px;font-weight:400;font-style:normal;color:#2c334d;transform:scaleX(0.9043)">565393072172</div>
<div class="t" style="left:567.80px;top:710.40px;font-family:'Liberation Mono', monospace;font-size:13px;font-weight:400;font-style:normal;color:#2c334d;transform:scaleX(0.9022)">2025-10-29 21:11:18.000</div>
<div class="t" style="left:780.39px;top:710.40px;font-family:'Liberation Mono', monospace;font-size:13px;font-weight:400;font-style:normal;color:#2c334d;transform:scaleX(0.9050)">Informational</div>
<div class="t" style="left:956.50px;top:710.40px;font-family:'Liberation Mono', monospace;font-size:13px;font-weight:400;font-style:normal;color:#2c334d;transform:scaleX(0.8968)">Application Activity</div>
<div class="t" style="left:1131.70px;top:710.40px;font-family:'Liberation Mono', monospace;font-size:13px;font-weight:400;font-style:normal;color:#2c334d;transform:scaleX(0.8978)">API Activity</div>
<div class="t" style="left:1305.87px;top:710.40px;font-family:'Liberation Mono', monospace;font-size:13px;font-weight:400;font-style:normal;color:#2c334d;transform:scaleX(0.9311)">Invoke</div>
<div class="t" style="left:1481.70px;top:710.40px;font-family:'Liberation Mono', monospace;font-size:13px;font-weight:400;font-style:normal;color:#2c334d;transform:scaleX(0.9043)">565393072172</div>
<div class="t" style="left:567.80px;top:737.23px;font-family:'Liberation Mono', monospace;font-size:13px;font-weight:400;font-style:normal;color:#2c334d;transform:scaleX(0.9022)">2025-10-29 21:21:23.000</div>
<div class="t" style="left:780.39px;top:737.23px;font-family:'Liberation Mono', monospace;font-size:13px;font-weight:400;font-style:normal;color:#2c334d;transform:scaleX(0.9050)">Informational</div>
<div class="t" style="left:956.50px;top:737.23px;font-family:'Liberation Mono', monospace;font-size:13px;font-weight:400;font-style:normal;color:#2c334d;transform:scaleX(0.8968)">Application Activity</div>
<div class="t" style="left:1131.70px;top:737.23px;font-family:'Liberation Mono', monospace;font-size:13px;font-weight:400;font-style:normal;color:#2c334d;transform:scaleX(0.8978)">API Activity</div>
<div class="t" style="left:1305.87px;top:737.23px;font-family:'Liberation Mono', monospace;font-size:13px;font-weight:400;font-style:normal;color:#2c334d;transform:scaleX(0.9311)">Invoke</div>
<div class="t" style="left:1481.70px;top:737.23px;font-family:'Liberation Mono', monospace;font-size:13px;font-weight:400;font-style:normal;color:#2c334d;transform:scaleX(0.9043)">565393072172</div>
<div class="t" style="left:567.80px;top:764.06px;font-family:'Liberation Mono', monospace;font-size:13px;font-weight:400;font-style:normal;color:#2c334d;transform:scaleX(0.9022)">2025-10-29 21:26:25.000</div>
<div class="t" style="left:780.39px;top:764.06px;font-family:'Liberation Mono', monospace;font-size:13px;font-weight:400;font-style:normal;color:#2c334d;transform:scaleX(0.9050)">Informational</div>
<div class="t" style="left:956.50px;top:764.06px;font-family:'Liberation Mono', monospace;font-size:13px;font-weight:400;font-style:normal;color:#2c334d;transform:scaleX(0.8968)">Application Activity</div>
<div class="t" style="left:1131.70px;top:764.06px;font-family:'Liberation Mono', monospace;font-size:13px;font-weight:400;font-style:normal;color:#2c334d;transform:scaleX(0.8978)">API Activity</div>
<div class="t" style="left:1305.87px;top:764.06px;font-family:'Liberation Mono', monospace;font-size:13px;font-weight:400;font-style:normal;color:#2c334d;transform:scaleX(0.9311)">Invoke</div>
<div class="t" style="left:1481.70px;top:764.06px;font-family:'Liberation Mono', monospace;font-size:13px;font-weight:400;font-style:normal;color:#2c334d;transform:scaleX(0.9043)">565393072172</div>
<div class="t" style="left:567.80px;top:790.89px;font-family:'Liberation Mono', monospace;font-size:13px;font-weight:400;font-style:normal;color:#2c334d;transform:scaleX(0.9022)">2025-10-29 21:36:23.000</div>
<div class="t" style="left:780.39px;top:790.89px;font-family:'Liberation Mono', monospace;font-size:13px;font-weight:400;font-style:normal;color:#2c334d;transform:scaleX(0.9050)">Informational</div>
<div class="t" style="left:956.50px;top:790.89px;font-family:'Liberation Mono', monospace;font-size:13px;font-weight:400;font-style:normal;color:#2c334d;transform:scaleX(0.8968)">Application Activity</div>
<div class="t" style="left:1131.70px;top:790.89px;font-family:'Liberation Mono', monospace;font-size:13px;font-weight:400;font-style:normal;color:#2c334d;transform:scaleX(0.8978)">API Activity</div>
<div class="t" style="left:1305.87px;top:790.89px;font-family:'Liberation Mono', monospace;font-size:13px;font-weight:400;font-style:normal;color:#2c334d;transform:scaleX(0.9311)">Invoke</div>
<div class="t" style="left:1481.70px;top:790.89px;font-family:'Liberation Mono', monospace;font-size:13px;font-weight:400;font-style:normal;color:#2c334d;transform:scaleX(0.9043)">565393072172</div>
<div class="t" style="left:567.80px;top:817.72px;font-family:'Liberation Mono', monospace;font-size:13px;font-weight:400;font-style:normal;color:#2c334d;transform:scaleX(0.9022)">2025-10-29 21:41:20.000</div>
<div class="t" style="left:780.39px;top:817.72px;font-family:'Liberation Mono', monospace;font-size:13px;font-weight:400;font-style:normal;color:#2c334d;transform:scaleX(0.9050)">Informational</div>
<div class="t" style="left:956.50px;top:817.72px;font-family:'Liberation Mono', monospace;font-size:13px;font-weight:400;font-style:normal;color:#2c334d;transform:scaleX(0.8968)">Application Activity</div>
<div class="t" style="left:1131.70px;top:817.72px;font-family:'Liberation Mono', monospace;font-size:13px;font-weight:400;font-style:normal;color:#2c334d;transform:scaleX(0.8978)">API Activity</div>
<div class="t" style="left:1305.87px;top:817.72px;font-family:'Liberation Mono', monospace;font-size:13px;font-weight:400;font-style:normal;color:#2c334d;transform:scaleX(0.9311)">Invoke</div>
<div class="t" style="left:1481.70px;top:817.72px;font-family:'Liberation Mono', monospace;font-size:13px;font-weight:400;font-style:normal;color:#2c334d;transform:scaleX(0.9043)">565393072172</div>
<div class="t" style="left:567.80px;top:844.55px;font-family:'Liberation Mono', monospace;font-size:13px;font-weight:400;font-style:normal;color:#2c334d;transform:scaleX(0.9022)">2025-10-29 21:51:24.000</div>
<div class="t" style="left:780.39px;top:844.55px;font-family:'Liberation Mono', monospace;font-size:13px;font-weight:400;font-style:normal;color:#2c334d;transform:scaleX(0.9050)">Informational</div>
<div class="t" style="left:956.50px;top:844.55px;font-family:'Liberation Mono', monospace;font-size:13px;font-weight:400;font-style:normal;color:#2c334d;transform:scaleX(0.8968)">Application Activity</div>
<div class="t" style="left:1131.70px;top:844.55px;font-family:'Liberation Mono', monospace;font-size:13px;font-weight:400;font-style:normal;color:#2c334d;transform:scaleX(0.8978)">API Activity</div>
<div class="t" style="left:1305.87px;top:844.55px;font-family:'Liberation Mono', monospace;font-size:13px;font-weight:400;font-style:normal;color:#2c334d;transform:scaleX(0.9311)">Invoke</div>
<div class="t" style="left:1481.70px;top:844.55px;font-family:'Liberation Mono', monospace;font-size:13px;font-weight:400;font-style:normal;color:#2c334d;transform:scaleX(0.9043)">565393072172</div>
<div class="t" style="left:567.80px;top:871.38px;font-family:'Liberation Mono', monospace;font-size:13px;font-weight:400;font-style:normal;color:#2c334d;transform:scaleX(0.9022)">2025-10-29 21:56:19.000</div>
<div class="t" style="left:780.39px;top:871.38px;font-family:'Liberation Mono', monospace;font-size:13px;font-weight:400;font-style:normal;color:#2c334d;transform:scaleX(0.9050)">Informational</div>
<div class="t" style="left:956.50px;top:871.38px;font-family:'Liberation Mono', monospace;font-size:13px;font-weight:400;font-style:normal;color:#2c334d;transform:scaleX(0.8968)">Application Activity</div>
<div class="t" style="left:1131.70px;top:871.38px;font-family:'Liberation Mono', monospace;font-size:13px;font-weight:400;font-style:normal;color:#2c334d;transform:scaleX(0.8978)">API Activity</div>
<div class="t" style="left:1305.87px;top:871.38px;font-family:'Liberation Mono', monospace;font-size:13px;font-weight:400;font-style:normal;color:#2c334d;transform:scaleX(0.9311)">Invoke</div>
<div class="t" style="left:1481.70px;top:871.38px;font-family:'Liberation Mono', monospace;font-size:13px;font-weight:400;font-style:normal;color:#2c334d;transform:scaleX(0.9043)">565393072172</div>
<div class="t" style="left:567.80px;top:898.21px;font-family:'Liberation Mono', monospace;font-size:13px;font-weight:400;font-style:normal;color:#2c334d;transform:scaleX(0.9022)">2025-10-29 22:06:20.000</div>
<div class="t" style="left:780.39px;top:898.21px;font-family:'Liberation Mono', monospace;font-size:13px;font-weight:400;font-style:normal;color:#2c334d;transform:scaleX(0.9050)">Informational</div>
<div class="t" style="left:956.50px;top:898.21px;font-family:'Liberation Mono', monospace;font-size:13px;font-weight:400;font-style:normal;color:#2c334d;transform:scaleX(0.8968)">Application Activity</div>
<div class="t" style="left:1131.70px;top:898.21px;font-family:'Liberation Mono', monospace;font-size:13px;font-weight:400;font-style:normal;color:#2c334d;transform:scaleX(0.8978)">API Activity</div>
<div class="t" style="left:1305.87px;top:898.21px;font-family:'Liberation Mono', monospace;font-size:13px;font-weight:400;font-style:normal;color:#2c334d;transform:scaleX(0.9311)">Invoke</div>
<div class="t" style="left:1481.70px;top:898.21px;font-family:'Liberation Mono', monospace;font-size:13px;font-weight:400;font-style:normal;color:#2c334d;transform:scaleX(0.9043)">565393072172</div>
</body></html>
